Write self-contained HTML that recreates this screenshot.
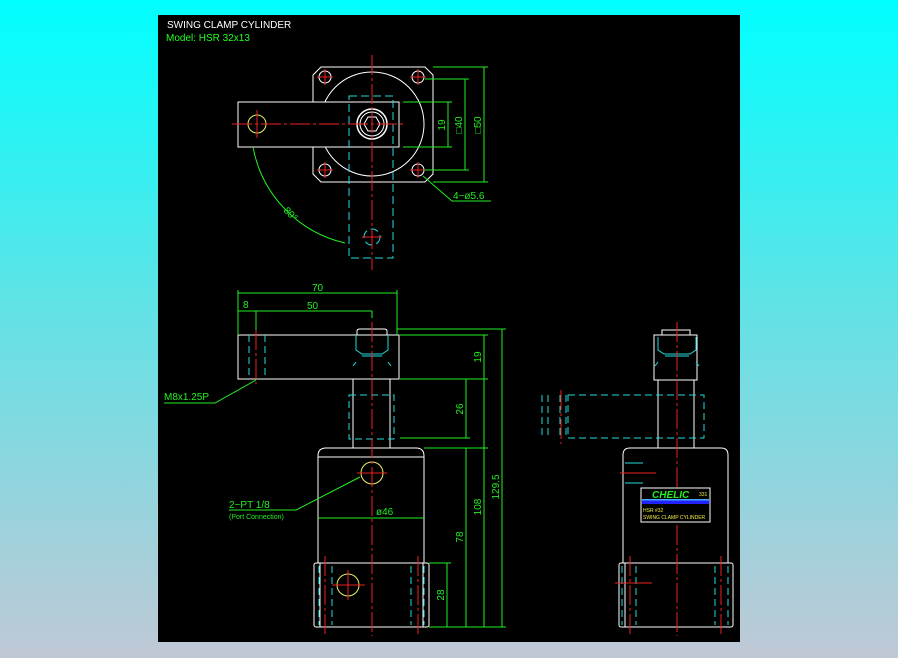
<!DOCTYPE html>
<html><head><meta charset="utf-8"><style>
html,body{margin:0;padding:0;width:898px;height:658px;overflow:hidden;background:linear-gradient(#00ffff 0%,#5ee3e6 45%,#c0c8d6 100%);}
svg{position:absolute;left:0;top:0}
text{font-family:"Liberation Sans",sans-serif}
</style></head><body>
<svg width="898" height="658" viewBox="0 0 898 658">
<rect x="158" y="15" width="582" height="627" fill="#000"/>
<text x="167" y="28" fill="#fff" font-size="10">SWING  CLAMP  CYLINDER</text>
<text x="166" y="41" fill="#2f2" font-size="10">Model:  HSR  32x13</text>

<!-- TOP VIEW -->
<g fill="none" stroke="#fff" stroke-width="1">
<polygon points="321,67 425,67 433,75 433,174 425,182 321,182 313,174 313,75"/>
<circle cx="372" cy="124" r="52"/>
<rect x="238" y="102" width="161" height="45" fill="#000"/>
<circle cx="325" cy="77" r="6"/><circle cx="418" cy="77" r="6"/><circle cx="325" cy="170" r="6"/><circle cx="418" cy="170" r="6"/>
<circle cx="372" cy="124" r="15" stroke-width="1.5"/><circle cx="372" cy="124" r="12"/>
<polygon points="380,124 376,131 368,131 364,124 368,117 376,117"/>
</g>
<circle cx="257" cy="124" r="9" fill="none" stroke="#ee6"/>
<g fill="none" stroke="#2dd" stroke-dasharray="8,4">
<rect x="349" y="96" width="44" height="162"/>
<circle cx="372" cy="237" r="8"/>
</g>
<g stroke="#e22" stroke-width="1" stroke-dasharray="20,3,3,3">
<line x1="372" y1="55" x2="372" y2="270"/>
<line x1="232" y1="124" x2="405" y2="124"/>
</g>
<g stroke="#e22"><line x1="257" y1="110" x2="257" y2="138"/><line x1="362" y1="237" x2="382" y2="237"/>
<line x1="317" y1="77" x2="333" y2="77"/><line x1="325" y1="69" x2="325" y2="85"/>
<line x1="410" y1="77" x2="426" y2="77"/><line x1="418" y1="69" x2="418" y2="85"/>
<line x1="317" y1="170" x2="333" y2="170"/><line x1="325" y1="162" x2="325" y2="178"/>
<line x1="410" y1="170" x2="426" y2="170"/><line x1="418" y1="162" x2="418" y2="178"/></g>
<g stroke="#2e2" fill="none">
<line x1="403" y1="102" x2="452" y2="102"/><line x1="403" y1="147" x2="452" y2="147"/><line x1="448" y1="102" x2="448" y2="147"/>
<line x1="425" y1="79" x2="469" y2="79"/><line x1="425" y1="170" x2="469" y2="170"/><line x1="465" y1="79" x2="465" y2="170"/>
<line x1="433" y1="67" x2="488" y2="67"/><line x1="433" y1="182" x2="488" y2="182"/><line x1="484" y1="67" x2="484" y2="182"/>
<polyline points="423,176 452,201 491,201"/>
<path d="M253,147 A121,121 0 0 0 345,243"/>
</g>
<g fill="#2e2" font-size="10">
<text transform="translate(445,125) rotate(-90)" text-anchor="middle">19</text>
<text transform="translate(462,125) rotate(-90)" text-anchor="middle">□40</text>
<text transform="translate(481,125) rotate(-90)" text-anchor="middle">□50</text>
<text x="453" y="199">4−ø5.6</text>
<text transform="translate(283,211) rotate(45)">80°</text>
</g>

<!-- FRONT VIEW -->
<g fill="none" stroke="#fff">
<path d="M357,335 V331 Q357,329 360,329 H384 Q387,329 387,331 V335"/>
<rect x="238" y="335" width="161" height="44"/>
<line x1="353" y1="379" x2="353" y2="448"/><line x1="390" y1="379" x2="390" y2="448"/>
<path d="M318,563 V456 Q318,448 326,448 H416 Q424,448 424,456 V563"/>
<line x1="318" y1="457" x2="424" y2="457"/>
<rect x="314" y="563" width="115" height="64" rx="2"/>
<line x1="320" y1="563" x2="320" y2="627"/><line x1="423" y1="563" x2="423" y2="627"/>
</g>
<g fill="none" stroke="#2dd" stroke-dasharray="7,4">
<rect x="349" y="395" width="45" height="44"/>
<line x1="249" y1="335" x2="249" y2="379"/><line x1="265" y1="335" x2="265" y2="379"/>
<line x1="319" y1="566" x2="319" y2="625"/><line x1="332" y1="566" x2="332" y2="625"/>
<line x1="411" y1="566" x2="411" y2="625"/><line x1="424" y1="566" x2="424" y2="625"/>
</g>
<g fill="none" stroke="#2dd"><path d="M356,335 V350 L362,354 H382 L388,350 V335 M356,362 L353,366 M388,362 L391,366 M362,356 H382"/></g>
<circle cx="372" cy="473" r="11" fill="none" stroke="#ee6"/>
<circle cx="348" cy="585" r="11" fill="none" stroke="#ee6"/>
<g stroke="#e22" stroke-dasharray="20,3,3,3"><line x1="372" y1="322" x2="372" y2="636"/><line x1="256" y1="330" x2="256" y2="384"/>
<line x1="325" y1="556" x2="325" y2="634"/><line x1="418" y1="556" x2="418" y2="634"/></g>
<g stroke="#e22"><line x1="357" y1="473" x2="387" y2="473"/><line x1="332" y1="585" x2="365" y2="585"/><line x1="348" y1="570" x2="348" y2="600"/></g>
<g stroke="#2e2" fill="none">
<line x1="238" y1="290" x2="238" y2="335"/><line x1="397" y1="290" x2="397" y2="335"/>
<line x1="238" y1="293" x2="397" y2="293"/><line x1="238" y1="311" x2="372" y2="311"/><line x1="256" y1="311" x2="256" y2="330"/><line x1="372" y1="311" x2="372" y2="318"/>
<line x1="397" y1="329" x2="506" y2="329"/><line x1="400" y1="335" x2="488" y2="335"/><line x1="400" y1="379" x2="488" y2="379"/>
<line x1="400" y1="438" x2="470" y2="438"/><line x1="424" y1="448" x2="488" y2="448"/><line x1="429" y1="563" x2="451" y2="563"/>
<line x1="429" y1="627" x2="506" y2="627"/>
<line x1="484" y1="335" x2="484" y2="379"/><line x1="466" y1="379" x2="466" y2="438"/>
<line x1="484" y1="379" x2="484" y2="627"/><line x1="502" y1="329" x2="502" y2="627"/>
<line x1="447" y1="563" x2="447" y2="627"/><line x1="466" y1="448" x2="466" y2="627"/>
<line x1="318" y1="518" x2="424" y2="518"/>
<polyline points="164,403 215,403 256,380"/>
<polyline points="229,510 296,510 360,477"/>
</g>
<g fill="#2e2" font-size="10">
<text x="312" y="291">70</text><text x="307" y="309">50</text><text x="243" y="308">8</text>
<text transform="translate(481,357) rotate(-90)" text-anchor="middle">19</text>
<text transform="translate(463,409) rotate(-90)" text-anchor="middle">26</text>
<text transform="translate(481,507) rotate(-90)" text-anchor="middle">108</text>
<text transform="translate(499,487) rotate(-90)" text-anchor="middle">129.5</text>
<text transform="translate(444,595) rotate(-90)" text-anchor="middle">28</text>
<text transform="translate(463,537) rotate(-90)" text-anchor="middle">78</text>
<text x="376" y="515">ø46</text>
<text x="164" y="400">M8x1.25P</text>
<text x="229" y="508">2−PT 1/8</text>
<text x="229" y="519" font-size="7">(Port Connection)</text>
</g>

<!-- SIDE VIEW -->
<g fill="none" stroke="#fff">
<path d="M662,335 V330 H690 V335"/>
<rect x="654" y="335" width="43" height="45"/>
<line x1="658" y1="380" x2="658" y2="448"/><line x1="694" y1="380" x2="694" y2="448"/>
<path d="M623,563 V455 Q623,448 630,448 H721 Q728,448 728,455 V563"/>
<rect x="619" y="563" width="114" height="64" rx="2"/>
<line x1="625" y1="563" x2="625" y2="627"/>
</g>
<g fill="none" stroke="#2dd" stroke-dasharray="7,4">
<rect x="568" y="395" width="136" height="43"/>
<line x1="542" y1="395" x2="542" y2="438"/><line x1="548" y1="395" x2="548" y2="438"/><line x1="560" y1="395" x2="560" y2="438"/><line x1="566" y1="395" x2="566" y2="438"/>
<line x1="622" y1="566" x2="622" y2="625"/><line x1="636" y1="566" x2="636" y2="625"/><line x1="715" y1="566" x2="715" y2="625"/><line x1="728" y1="566" x2="728" y2="625"/>
</g>
<g fill="none" stroke="#2dd"><path d="M658,337 V350 L664,354 H690 L696,350 V337 M658,362 L655,366 M696,362 L699,366 M665,356 H689 M625,463 H643 M625,483 H643"/></g>
<g stroke="#e22" stroke-dasharray="20,3,3,3"><line x1="677" y1="322" x2="677" y2="636"/><line x1="561" y1="390" x2="561" y2="444"/>
<line x1="630" y1="556" x2="630" y2="634"/><line x1="721" y1="556" x2="721" y2="634"/></g>
<g stroke="#e22"><line x1="620" y1="473" x2="656" y2="473"/><line x1="615" y1="583" x2="652" y2="583"/></g>
<rect x="641" y="488" width="69" height="34" fill="#000" stroke="#fff"/>
<rect x="642" y="500" width="67" height="4" fill="#22f"/>
<rect x="642" y="499" width="67" height="1.5" fill="#4af"/>
<text x="652" y="498" fill="#2e2" font-size="10" font-weight="bold" font-style="italic">CHELIC</text>
<text x="699" y="496" fill="#ee4" font-size="5">331</text>
<text x="643" y="512" fill="#ee4" font-size="5">HSR #32</text>
<text x="643" y="519" fill="#ee4" font-size="5">SWING CLAMP CYLINDER</text>
</svg>
</body></html>
